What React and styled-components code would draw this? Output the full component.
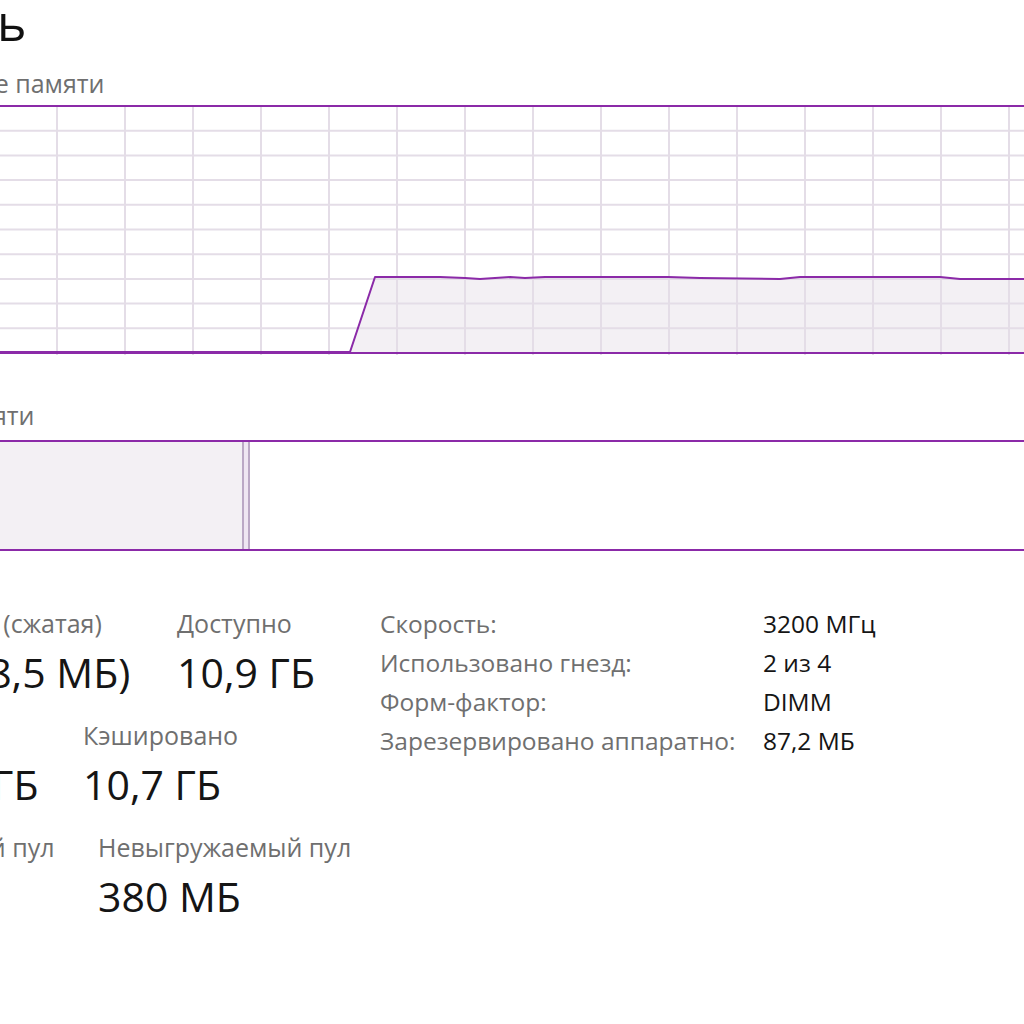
import styled, { createGlobalStyle } from 'styled-components';

const OFFSET = 183;
const PURPLE = '#8b2aa8';
const GRID = '#e4dde7';

const GlobalStyle = createGlobalStyle`
  html, body {
    margin: 0;
    padding: 0;
    background: #ffffff;
    overflow: hidden;
  }
`;

const Page = styled.div`
  width: 1024px;
  height: 1024px;
  overflow: hidden;
  background: #ffffff;
  font-family: "Open Sans", "Noto Sans", sans-serif;
`;

const Content = styled.div`
  margin-left: -${OFFSET}px;
  width: ${OFFSET + 1100}px;
  display: flex;
  flex-direction: column;
`;

const Title = styled.h1`
  margin: 0 0 0 ${p => p.$shift}px;
  font-weight: 400;
  font-size: 50px;
  line-height: 45px;
  height: 62px;
  color: #111111;
`;

const GraphLabel = styled.div`
  font-size: 25px;
  line-height: 30px;
  color: #6f6f6f;
  margin-top: ${p => p.$top}px;
  margin-bottom: ${p => p.$bottom}px;
  white-space: nowrap;
`;

const GraphSvg = styled.svg`
  display: block;
`;

const CompositionBar = styled.div`
  display: flex;
  height: 107px;
  border-top: 2px solid ${PURPLE};
  border-bottom: 2px solid ${PURPLE};
  box-shadow: inset 0 2px 0 #f5e0f7, inset 0 -2px 0 #f5e0f7;
`;

const Segment = styled.div`
  flex: ${p => p.$grow ? '1 1 auto' : '0 0 auto'};
  width: ${p => p.$w ? `${p.$w}px` : 'auto'};
  background: ${p => p.$fill};
  border-left: ${p => p.$divider ? '2px solid #bba8c5' : 'none'};
  border-right: ${p => p.$divider ? '2px solid #bba8c5' : 'none'};
`;

const Stats = styled.div`
  display: flex;
  margin-top: 51px;
`;

const LeftStats = styled.div`
  width: ${OFFSET + 380}px;
  padding-top: 6px;
  display: flex;
  flex-direction: column;
`;

const StatRow = styled.div`
  display: flex;
  height: 112px;
`;

const StatCell = styled.div`
  width: ${p => p.$w ? `${p.$w}px` : 'auto'};
  flex: none;
  display: flex;
  flex-direction: column;
`;

const StatLabel = styled.div`
  margin-left: ${p => p.$nudge || 0}px;
  font-size: 25px;
  line-height: 30px;
  color: #6f6f6f;
  white-space: nowrap;
`;

const StatValue = styled.div`
  margin-left: ${p => p.$nudge || 0}px;
  margin-top: 9px;
  font-size: 41px;
  line-height: 50px;
  color: #151515;
  white-space: nowrap;
`;

const InfoTable = styled.div`
  display: grid;
  grid-template-columns: 383px auto;
  grid-auto-rows: 39px;
  align-content: start;
  padding-top: 2px;
`;

const InfoKey = styled.div`
  font-size: 24.5px;
  line-height: 39px;
  color: #6f6f6f;
  white-space: nowrap;
`;

const InfoValue = styled.div`
  font-size: 24.5px;
  line-height: 39px;
  color: #151515;
  white-space: nowrap;
`;

// graph drawn in page coordinates, moved right by OFFSET
const GRAPH_W = OFFSET + 1100;
const GRAPH_H = 250;

const UsageGraph = () => {
  const verticals = [];
  for (let x = 57 - 68 * 3; x < 1100; x += 68) verticals.push(x + OFFSET);
  const horizontals = [];
  for (let i = 1; i < 10; i++) horizontals.push(1 + i * 24.7);

  const pts = [
    [-250, 247], [350, 247], [375, 172], [440, 172], [465, 173], [480, 174],
    [495, 173], [510, 172], [525, 173], [545, 172], [600, 172], [668, 172],
    [700, 173], [780, 174], [800, 172], [940, 172], [960, 174], [1100, 174],
  ].map(([x, y]) => [x + OFFSET, y]);
  const line = pts.map(p => p.join(',')).join(' ');
  const area = `${line} ${1100 + OFFSET},247 ${-250 + OFFSET},247`;

  return (
    <GraphSvg width={GRAPH_W} height={GRAPH_H} viewBox={`0 0 ${GRAPH_W} ${GRAPH_H}`}>
      <polygon points={area} fill="#f3f0f4" />
      {horizontals.map(y => (
        <line key={y} x1="0" x2={GRAPH_W} y1={y} y2={y} stroke={GRID} strokeWidth="2" />
      ))}
      {verticals.map(x => (
        <line key={x} x1={x} x2={x} y1="0" y2={GRAPH_H} stroke={GRID} strokeWidth="2" />
      ))}
      <polyline points={line} fill="none" stroke={PURPLE} strokeWidth="2" strokeLinejoin="round" />
      <line x1="0" x2={GRAPH_W} y1="1" y2="1" stroke={PURPLE} strokeWidth="2" />
      <line x1="0" x2={GRAPH_W} y1="248" y2="248" stroke={PURPLE} strokeWidth="2" />
    </GraphSvg>
  );
};

const stats = [
  [
    { w: OFFSET + 177, label: 'Используется (сжатая)', value: '6,1 ГБ (338,5 МБ)', ln: 13, vn: -13 },
    { label: 'Доступно', value: '10,9 ГБ' },
  ],
  [
    { w: OFFSET + 83, label: 'Выделено', value: '6,6/19,8 ГБ', vn: 11 },
    { label: 'Кэшировано', value: '10,7 ГБ' },
  ],
  [
    { w: OFFSET + 98, label: 'Выгружаемый пул', value: '512 МБ', ln: 15 },
    { label: 'Невыгружаемый пул', value: '380 МБ' },
  ],
];

const info = [
  ['Скорость:', '3200 МГц'],
  ['Использовано гнезд:', '2 из 4'],
  ['Форм-фактор:', 'DIMM'],
  ['Зарезервировано аппаратно:', '87,2 МБ'],
];

const App = () => {
  return (
    <>
      <GlobalStyle />
      <Page>
        <Content>
          <Title $shift={28}>Память</Title>
          <GraphLabel $top={6} $bottom={7}>Использование памяти</GraphLabel>
          <UsageGraph />
          <GraphLabel $top={45} $bottom={10}>Структура памяти</GraphLabel>
          <CompositionBar>
            <Segment $w={OFFSET + 242} $fill="#f3f0f4" />
            <Segment $w={4} $divider $fill="#efe6f2" />
            <Segment $grow $fill="#ffffff" />
          </CompositionBar>
          <Stats>
            <LeftStats>
              {stats.map((row, i) => (
                <StatRow key={i}>
                  {row.map(cell => (
                    <StatCell key={cell.label} $w={cell.w}>
                      <StatLabel $nudge={cell.ln}>{cell.label}</StatLabel>
                      <StatValue $nudge={cell.vn}>{cell.value}</StatValue>
                    </StatCell>
                  ))}
                </StatRow>
              ))}
            </LeftStats>
            <InfoTable>
              {info.flatMap(([k, v]) => [
                <InfoKey key={k}>{k}</InfoKey>,
                <InfoValue key={v}>{v}</InfoValue>,
              ])}
            </InfoTable>
          </Stats>
        </Content>
      </Page>
    </>
  );
};

export default App;
